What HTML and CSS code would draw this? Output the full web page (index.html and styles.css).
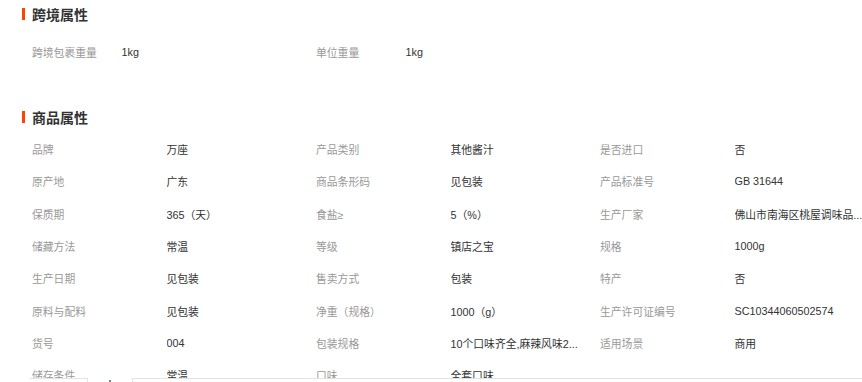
FILE: index.html
```html
<!DOCTYPE html>
<html lang="zh-CN">
<head>
<meta charset="utf-8">
<title>商品属性</title>
<link rel="stylesheet" href="styles.css">
</head>
<body>
<div class="page">
  <section class="section">
    <h3 class="section-title">跨境属性</h3>
    <div class="props props-cross">
      <div class="prop-label">跨境包裹重量</div><div class="prop-value">1kg</div>
      <div class="prop-label">单位重量</div><div class="prop-value">1kg</div>
    </div>
  </section>

  <section class="section section-goods">
    <h3 class="section-title">商品属性</h3>
    <div class="props props-goods">
      <div class="prop-label">品牌</div><div class="prop-value">万座</div>
      <div class="prop-label">产品类别</div><div class="prop-value">其他酱汁</div>
      <div class="prop-label">是否进口</div><div class="prop-value">否</div>

      <div class="prop-label">原产地</div><div class="prop-value">广东</div>
      <div class="prop-label">商品条形码</div><div class="prop-value">见包装</div>
      <div class="prop-label">产品标准号</div><div class="prop-value">GB 31644</div>

      <div class="prop-label">保质期</div><div class="prop-value">365（天）</div>
      <div class="prop-label">食盐≥</div><div class="prop-value">5（%）</div>
      <div class="prop-label">生产厂家</div><div class="prop-value">佛山市南海区桃屋调味品...</div>

      <div class="prop-label">储藏方法</div><div class="prop-value">常温</div>
      <div class="prop-label">等级</div><div class="prop-value">镇店之宝</div>
      <div class="prop-label">规格</div><div class="prop-value">1000g</div>

      <div class="prop-label">生产日期</div><div class="prop-value">见包装</div>
      <div class="prop-label">售卖方式</div><div class="prop-value">包装</div>
      <div class="prop-label">特产</div><div class="prop-value">否</div>

      <div class="prop-label">原料与配料</div><div class="prop-value">见包装</div>
      <div class="prop-label">净重（规格）</div><div class="prop-value">1000（g）</div>
      <div class="prop-label">生产许可证编号</div><div class="prop-value">SC10344060502574</div>

      <div class="prop-label">货号</div><div class="prop-value">004</div>
      <div class="prop-label">包装规格</div><div class="prop-value">10个口味齐全,麻辣风味2...</div>
      <div class="prop-label">适用场景</div><div class="prop-value">商用</div>

      <div class="prop-label">储存条件</div><div class="prop-value">常温</div>
      <div class="prop-label">口味</div><div class="prop-value">全套口味</div>
    </div>
  </section>
</div>

<div class="tabbar">
  <div class="tab tab-first"></div>
  <div class="tab-dot"></div>
  <div class="tab tab-rest"></div>
</div>
</body>
</html>
```

FILE: styles.css
```css
html, body {
  margin: 0;
  padding: 0;
  background: #fff;
  overflow: hidden;
}

body {
  font-family: "Liberation Sans", "Noto Sans CJK SC", sans-serif;
  font-size: 10.8px;
  color: #333;
}

.page {
  width: 862px;
  height: 382px;
  overflow: hidden;
}

.section {
  padding-left: 22px;
}

.section-goods {
  margin-top: 35px;
}

.section-title {
  margin: 0;
  display: flex;
  align-items: center;
  gap: 7px;
  height: 28px;
  font-size: 14px;
  font-weight: bold;
  color: #333;
}

.section-title::before {
  content: "";
  width: 3px;
  height: 12px;
  background: #ff4400;
}

.props {
  display: grid;
  padding-left: 10px;
  align-items: center;
}

.props-cross {
  margin-top: 8px;
  grid-template-columns: 89.5px 194.5px 89.5px 194.5px;
  grid-auto-rows: 32px;
}

.props-goods {
  margin-top: 2px;
  grid-template-columns: 134.5px 149.5px 134.5px 149.5px 134.5px 149.5px;
  grid-auto-rows: 32.3px;
}

.prop-label {
  color: #999;
  white-space: nowrap;
}

.prop-value {
  color: #333;
  white-space: nowrap;
  overflow: hidden;
}

.tabbar {
  position: fixed;
  left: 0;
  right: 0;
  top: 378px;
  height: 40px;
  display: flex;
  align-items: flex-start;
  background: #fff;
}

.tab {
  height: 40px;
  border-top: 1px solid #e3e3e3;
}

.tab-first {
  margin-left: 30px;
  width: 57px;
  border-right: 1px solid #e3e3e3;
}

.tab-dot {
  width: 2px;
  height: 2px;
  margin: 2px 21px 0 21px;
  background: #7a8594;
}

.tab-rest {
  flex: 1;
  border-left: 1px solid #e3e3e3;
}
```
